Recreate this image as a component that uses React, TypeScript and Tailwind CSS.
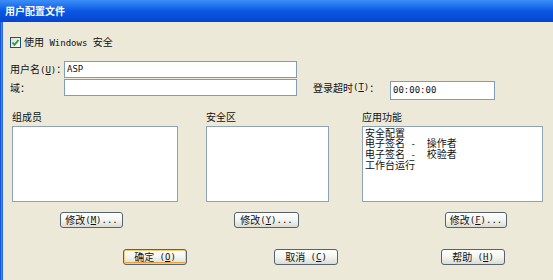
import React from "react";

const L = ({ children }: { children: React.ReactNode }) => (
  <span className="font-['DejaVu_Sans_Mono',monospace] text-[9px] whitespace-pre">{children}</span>
);

const Key = ({ k }: { k: string }) => (
  <L>
    (<span className="underline">{k}</span>)
  </L>
);

function XpButton({
  label,
  k,
  dots,
  gap,
  width,
  isDefault,
  className = "",
}: {
  label: string;
  k: string;
  dots?: boolean;
  gap?: boolean;
  width: string;
  isDefault?: boolean;
  className?: string;
}) {
  return (
    <button
      className={`${width} ${className} h-[16px] shrink-0 flex items-center justify-center whitespace-nowrap rounded-[3px] border border-[#55626f] bg-gradient-to-b from-white via-[#f4f4f0] to-[#dcdcd4] text-[10px] leading-none text-[#111] ${
        isDefault ? "shadow-[inset_0_0_0_1px_#f6cd76,inset_0_-1px_0_1px_#e5a23a]" : ""
      }`}
    >
      {label}
      {gap && <L> </L>}
      <Key k={k} />
      {dots && <L>...</L>}
    </button>
  );
}

function ListBox({ width, children }: { width: string; children?: React.ReactNode }) {
  return (
    <div className={`${width} h-[76px] mt-[2px] bg-white border border-[#8fa3b6] pl-[2px] pt-[1px] text-[10px] leading-[10px]`}>
      {children}
    </div>
  );
}

export default function App() {
  return (
    <div className="w-[553px] h-[280px] overflow-hidden flex flex-col bg-[#ece9d8] font-['Noto_Sans_CJK_SC',sans-serif] text-[10px] leading-none text-[#111]">
      {/* title bar */}
      <div className="h-[22px] shrink-0 flex items-center pl-[5px] bg-gradient-to-b from-[#3d8ef7] via-[#0a58e4] to-[#0744cf]">
        <span className="text-white font-bold text-[10px]">用户配置文件</span>
      </div>

      <div className="flex flex-1">
        <div className="w-[3px] bg-gradient-to-r from-[#0a3ec8] via-[#3b82f0] to-[#1660e8]" />

        <div className="flex-1 flex flex-col pl-[7px]">
          {/* use windows security */}
          <div className="mt-[15px] h-[11px] flex items-center">
            <div className="w-[11px] h-[11px] border border-[#1c5180] bg-gradient-to-br from-[#dcdcd7] to-white flex items-center justify-center">
              <svg width="9" height="9" viewBox="0 0 9 9">
                <polyline points="1.5,4.5 3.5,6.8 7.5,2" fill="none" stroke="#21a121" strokeWidth="1.8" />
              </svg>
            </div>
            <span className="ml-[3px] whitespace-nowrap">
              使用<L> Windows </L>安全
            </span>
          </div>

          {/* user name */}
          <div className="mt-[13px] h-[17px] flex items-center">
            <span className="w-[54px] whitespace-nowrap">
              用户名<Key k="U" />：
            </span>
            <div className="w-[233px] h-[17px] bg-white border border-[#7f9db9] flex items-center pl-[2px]">
              <L>ASP</L>
            </div>
          </div>

          {/* domain + timeout */}
          <div className="mt-[1px] h-[21px] flex items-start">
            <span className="w-[54px] h-[17px] flex items-center">域：</span>
            <div className="w-[233px] h-[17px] bg-white border border-[#7f9db9]" />
            <span className="ml-[16px] w-[77px] h-[17px] flex items-center whitespace-nowrap">
              登录超时<Key k="T" />：
            </span>
            <div className="mt-[2px] w-[105px] h-[19px] bg-white border border-[#7f9db9] flex items-center pl-[2px]">
              <L>00:00:00</L>
            </div>
          </div>

          {/* three lists */}
          <div className="mt-[10px] flex items-start ml-[2px]">
            <div className="flex flex-col">
              <span className="h-[14px] flex items-center">组成员</span>
              <ListBox width="w-[166px]" />
              <XpButton label="修改" k="M" dots width="w-[63px]" className="mt-[10px] ml-[48px]" />
            </div>
            <div className="flex flex-col ml-[28px]">
              <span className="h-[14px] flex items-center">安全区</span>
              <ListBox width="w-[123px]" />
              <XpButton label="修改" k="Y" dots width="w-[65px]" className="mt-[10px] ml-[28px]" />
            </div>
            <div className="flex flex-col ml-[33px]">
              <span className="h-[14px] flex items-center">应用功能</span>
              <ListBox width="w-[181px]">
                <div>安全配置</div>
                <div className="whitespace-nowrap">
                  电子签名<L> -  </L>操作者
                </div>
                <div className="whitespace-nowrap">
                  电子签名<L> -  </L>校验者
                </div>
                <div>工作台运行</div>
              </ListBox>
              <XpButton label="修改" k="F" dots width="w-[62px]" className="mt-[10px] ml-[83px]" />
            </div>
          </div>

          {/* dialog buttons */}
          <div className="mt-[21px] flex">
            <XpButton label="确定" k="O" gap width="w-[64px]" isDefault className="ml-[113px]" />
            <XpButton label="取消" k="C" gap width="w-[64px]" className="ml-[87px]" />
            <XpButton label="帮助" k="H" gap width="w-[64px]" className="ml-[103px]" />
          </div>
        </div>
      </div>
    </div>
  );
}
